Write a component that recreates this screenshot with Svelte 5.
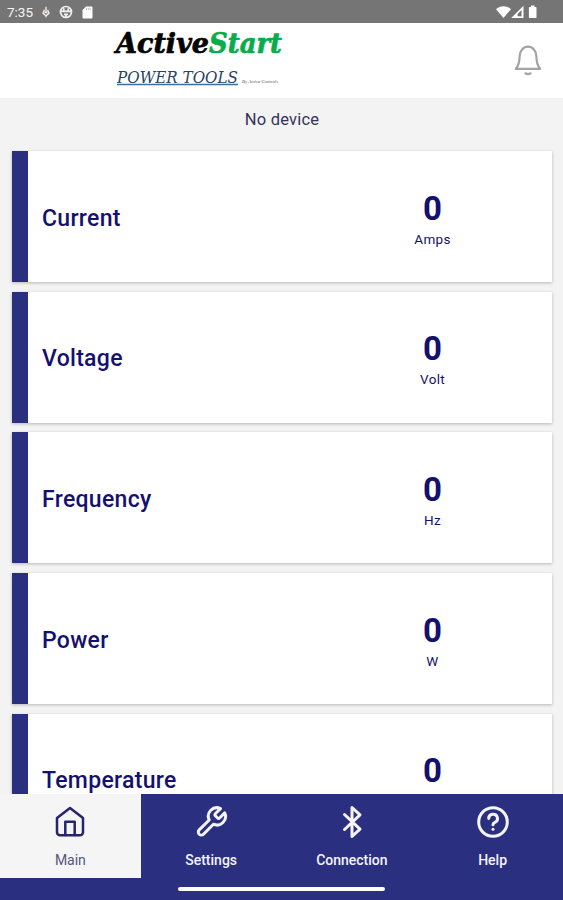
<script lang="ts">
	const readings = [
		{ label: "Current", value: 0, unit: "Amps" },
		{ label: "Voltage", value: 0, unit: "Volt" },
		{ label: "Frequency", value: 0, unit: "Hz" },
		{ label: "Power", value: 0, unit: "W" },
		{ label: "Temperature", value: 0, unit: "" },
	];

	const tabs = [
		{ id: "main", label: "Main" },
		{ id: "settings", label: "Settings" },
		{ id: "connection", label: "Connection" },
		{ id: "help", label: "Help" },
	];

	let active = $state("main");
</script>

<div class="screen">
	<div class="status">
		<div class="status-left">
			<span class="time">7:35</span>
			<svg class="mic" width="8" height="12" viewBox="0 0 8 12">
				<path d="M4 .8v6M2.400 3.800 1 7.200 4 9.800 7 7.200 5.600 3.800M2.500 6.500h3M4 9v2.200" />
			</svg>
			<svg class="ball" width="14" height="14" viewBox="0 0 14 14">
				<circle cx="7" cy="7" r="5.500" />
				<path d="M1.500 6.300h11M4.800 3.300v2.500M9.200 3.300v2.500M5 9.300h4M7 9.300v3" />
			</svg>
			<svg class="card-icon" width="11" height="13" viewBox="0 0 11 13">
				<path d="M4 .5h5.500a1 1 0 0 1 1 1v10a1 1 0 0 1-1 1h-8a1 1 0 0 1-1-1V4z" />
				<path class="pins" d="M4.500 2.300v1.500M6.300 2.300v1.500M8.100 2.300v1.500" />
			</svg>
		</div>
		<svg class="signals" width="44" height="14" viewBox="0 0 44 14">
			<path d="M0 4.200C4 .1 11 .1 15 4.200L7.500 13z" />
			<path fill-rule="evenodd" d="M15.200 13 27.500.8V13zM21.600 11.200h3.900V5l-3.900 3.900z" />
			<path d="M35 .5h3.400v1.400h1.200a.9.9 0 0 1 .9.900v9.400a.9.9 0 0 1-.9.900h-5.800a.9.9 0 0 1-.9-.9V2.800a.9.9 0 0 1 .9-.9H35z" />
		</svg>
	</div>

	<header>
		<svg class="logo" width="180" height="74" viewBox="0 0 180 74">
			<text class="brand" x="5" y="29" textLength="93" lengthAdjust="spacingAndGlyphs">Active</text>
			<text class="brand green" x="98" y="29" textLength="73" lengthAdjust="spacingAndGlyphs">Start</text>
			<text class="tools" x="6" y="58.500" textLength="121" lengthAdjust="spacingAndGlyphs">POWER TOOLS</text>
			<path class="underline" d="M6 60.500h121" />
			<text class="by" x="131" y="58.500" textLength="36" lengthAdjust="spacingAndGlyphs">By Active Controls</text>
		</svg>
		<svg class="bell" width="30" height="34" viewBox="0 0 30 34">
			<path d="M2.800 24.800h24.400C24.300 21.500 23.400 18 23.400 12.500a8.400 9.800 0 0 0-16.800 0C6.600 18 5.700 21.500 2.800 24.800z" />
			<path d="M12 28.500a3.200 2.600 0 0 0 6 0" />
		</svg>
	</header>

	<main>
		<p class="device">No device</p>
		{#each readings as reading}
			<section class="card">
				<h2>{reading.label}</h2>
				<div class="reading">
					<span class="value">{reading.value}</span>
					<span class="unit">{reading.unit}</span>
				</div>
			</section>
		{/each}
	</main>

	<nav>
		{#each tabs as tab}
			<button class:active={active === tab.id} onclick={() => (active = tab.id)}>
				<svg width="36" height="36" viewBox="0 0 36 36">
					{#if tab.id === "main"}
						<path d="M5 14 18 4l13 10v14.300a3 3 0 0 1-3 3H8a3 3 0 0 1-3-3z" />
						<path d="M13.300 31V17.800h9.400V31" />
					{:else if tab.id === "settings"}
						<path d="M22.300 9.700a1.400 1.400 0 0 0 0 2l2.300 2.300a1.400 1.400 0 0 0 2 0l5.100-5.100a8.500 8.500 0 0 1-11.300 11.300L10.500 30.200a3 3 0 0 1-4.300-4.300L16.200 16A8.500 8.500 0 0 1 27.500 4.600z" />
					{:else if tab.id === "connection"}
						<path d="m10.500 10.500 15.500 14.700-8 7.300v-29l8 7.300-15.500 14.700" />
					{:else}
						<circle cx="18" cy="18" r="14.300" />
						<path d="M13.700 14.400a4.400 4.200 0 1 1 6.200 3.900c-1.400.7-1.900 1.300-1.900 2.400" />
						<path d="M18 25.200v.1" />
					{/if}
				</svg>
				<span>{tab.label}</span>
			</button>
		{/each}
	</nav>
	<div class="gesture"><div class="handle"></div></div>
</div>

<style>
	:global(body) {
		margin: 0;
	}
	.screen {
		display: flex;
		flex-direction: column;
		width: 563px;
		height: 900px;
		overflow: hidden;
		background: #f3f3f3;
		font-family: Roboto, "Liberation Sans", sans-serif;
		color: #151070;
	}
	svg {
		display: block;
		flex: none;
	}

	.status {
		display: flex;
		flex: none;
		justify-content: space-between;
		align-items: center;
		box-sizing: border-box;
		height: 23px;
		padding: 1px 23px 0 7px;
		background: #757575;
		color: #f5f5f5;
	}
	.status-left {
		display: flex;
		align-items: center;
	}
	.time {
		width: 35px;
		font-size: 13.500px;
	}
	.mic,
	.ball {
		fill: none;
		stroke: #f0f0f0;
		stroke-width: 1.300;
	}
	.ball {
		margin-left: 9px;
		stroke-width: 1.700;
	}
	.card-icon {
		margin-left: 9px;
		fill: #fff;
	}
	.pins {
		stroke: #999;
		stroke-width: 0.800;
	}
	.signals {
		fill: #fff;
	}

	header {
		display: flex;
		flex: none;
		justify-content: space-between;
		align-items: center;
		height: 75px;
		padding: 0 20px 0 111px;
		background: #fff;
	}
	.brand {
		font: italic bold 27px "DejaVu Serif", serif;
		fill: #050505;
		stroke: #050505;
		stroke-width: 0.700;
	}
	.green {
		fill: #08ad4b;
		stroke: #08ad4b;
	}
	.tools {
		font: italic 17px "DejaVu Serif", serif;
		fill: #28445f;
	}
	.underline {
		stroke: #3f6f99;
		stroke-width: 1.300;
	}
	.by {
		font: italic 4.500px "Liberation Serif", serif;
		fill: #555;
	}
	.bell {
		fill: none;
		stroke: #a3a3a3;
		stroke-width: 2.200;
		stroke-linejoin: round;
	}

	main {
		flex: 1;
		min-height: 0;
		overflow: hidden;
		padding: 0 11px 0 12px;
	}
	.device {
		margin: 0;
		height: 53px;
		line-height: 44px;
		font-size: 16.500px;
		letter-spacing: 0.2px;
		text-align: center;
		color: #33335c;
	}
	.card {
		display: flex;
		align-items: center;
		box-sizing: border-box;
		height: 131px;
		margin-bottom: 9.700px;
		border-left: 16px solid #2b2f7f;
		background: #fff;
		box-shadow: 0 1px 3px rgba(0, 0, 0, 0.25);
	}
	h2 {
		flex: 1;
		margin: 0;
		padding: 3px 0 0 14px;
		font-size: 23px;
		font-weight: 500;
		letter-spacing: 0.3px;
	}
	.reading {
		display: flex;
		flex-direction: column;
		align-items: center;
		width: 239px;
		padding-top: 4px;
	}
	.value {
		line-height: 38px;
		font-size: 33px;
		font-weight: 700;
	}
	.unit {
		height: 18px;
		margin-top: 2px;
		line-height: 18px;
		font-size: 13.500px;
		letter-spacing: 0.3px;
	}

	nav {
		display: flex;
		flex: none;
		height: 84px;
		background: #2b2f7f;
	}
	button {
		display: flex;
		flex: 1 1 0;
		flex-direction: column;
		align-items: center;
		margin: 0;
		padding: 10px 0 0;
		border: 0;
		background: none;
		font: 500 14px Roboto, sans-serif;
		color: #f4f4fa;
	}
	button svg {
		fill: none;
		stroke: currentColor;
		stroke-width: 3;
		stroke-linecap: round;
		stroke-linejoin: round;
	}
	button span {
		margin-top: 11px;
		line-height: 18px;
	}
	.active {
		background: #f5f5f5;
		color: #24246f;
	}
	.active svg {
		stroke-width: 2.500;
	}
	.active span {
		font-weight: 400;
		color: #55557f;
	}
	.gesture {
		display: flex;
		flex: none;
		justify-content: center;
		height: 22px;
		background: #2b2f7f;
	}
	.handle {
		width: 207px;
		height: 4px;
		margin-top: 9px;
		border-radius: 2px;
		background: #fff;
	}
</style>
